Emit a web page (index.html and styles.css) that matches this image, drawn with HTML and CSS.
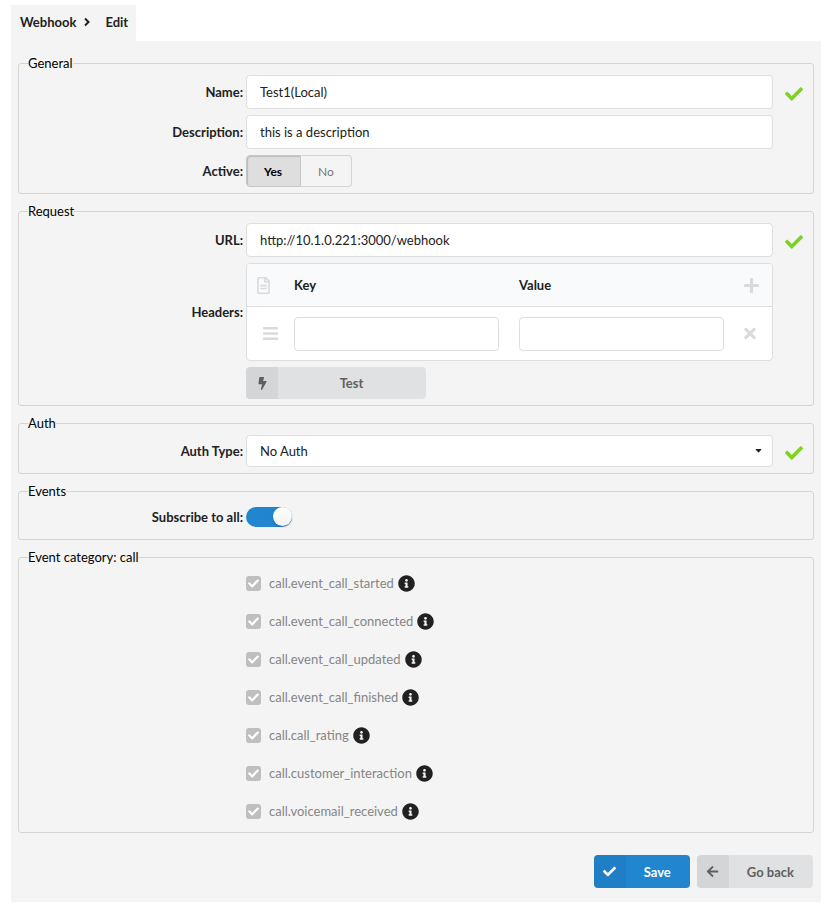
FILE: index.html
```html
<!DOCTYPE html>
<html lang="en">
<head>
    <meta charset="UTF-8">
    <meta name="viewport" content="width=device-width, initial-scale=1.0">
    <title>Webhook - Edit</title>
    <link rel="stylesheet" href="styles.css">
</head>
<body>
    <!-- Shared icons -->
    <svg class="sprite" aria-hidden="true">
        <symbol id="check" viewBox="0 0 512 512"><path d="M173.898 439.404l-166.4-166.4c-9.997-9.997-9.997-26.206 0-36.204l36.203-36.204c9.997-9.998 26.207-9.998 36.204 0L192 312.69 432.095 72.596c9.997-9.997 26.207-9.997 36.204 0l36.203 36.204c9.997 9.997 9.997 26.206 0 36.204l-294.4 294.401c-9.998 9.997-26.207 9.997-36.204-.001z"/></symbol>
        <symbol id="times" viewBox="0 0 352 512"><path d="M242.72 256l100.07-100.07c12.28-12.28 12.28-32.19 0-44.48l-22.24-22.24c-12.28-12.28-32.19-12.28-44.48 0L176 189.28 75.93 89.21c-12.28-12.28-32.19-12.28-44.48 0L9.21 111.45c-12.28 12.28-12.28 32.19 0 44.48L109.28 256 9.21 356.07c-12.28 12.28-12.28 32.19 0 44.48l22.24 22.24c12.28 12.28 32.2 12.28 44.48 0L176 322.72l100.07 100.07c12.28 12.28 32.2 12.28 44.48 0l22.24-22.24c12.28-12.28 12.28-32.19 0-44.48L242.72 256z"/></symbol>
        <symbol id="plus" viewBox="0 0 448 512"><path d="M416 208H272V64c0-17.67-14.33-32-32-32h-32c-17.67 0-32 14.33-32 32v144H32c-17.67 0-32 14.33-32 32v32c0 17.67 14.33 32 32 32h144v144c0 17.67 14.33 32 32 32h32c17.67 0 32-14.33 32-32V304h144c17.67 0 32-14.33 32-32v-32c0-17.67-14.33-32-32-32z"/></symbol>
        <symbol id="bars" viewBox="0 0 448 512"><path d="M16 132h416c8.837 0 16-7.163 16-16V76c0-8.837-7.163-16-16-16H16C7.163 60 0 67.163 0 76v40c0 8.837 7.163 16 16 16zm0 160h416c8.837 0 16-7.163 16-16v-40c0-8.837-7.163-16-16-16H16c-8.837 0-16 7.163-16 16v40c0 8.837 7.163 16 16 16zm0 160h416c8.837 0 16-7.163 16-16v-40c0-8.837-7.163-16-16-16H16c-8.837 0-16 7.163-16 16v40c0 8.837 7.163 16 16 16z"/></symbol>
        <symbol id="file" viewBox="0 0 384 512"><path d="M288 248v28c0 6.6-5.4 12-12 12H108c-6.6 0-12-5.4-12-12v-28c0-6.6 5.4-12 12-12h168c6.6 0 12 5.4 12 12zm-12 72H108c-6.6 0-12 5.4-12 12v28c0 6.6 5.4 12 12 12h168c6.6 0 12-5.4 12-12v-28c0-6.6-5.4-12-12-12zm108-188.1V464c0 26.5-21.5 48-48 48H48c-26.5 0-48-21.5-48-48V48C0 21.5 21.5 0 48 0h204.1C264.8 0 277 5.1 286 14.1L369.9 98c9 8.9 14.1 21.2 14.1 33.9zm-128-80V128h76.1L256 51.9zM336 464V176H232c-13.3 0-24-10.7-24-24V48H48v416h288z"/></symbol>
        <symbol id="bolt" viewBox="0 0 320 512"><path d="M296 160H180.6l42.6-129.8C227.2 15 215.7 0 200 0H56C44 0 33.8 8.9 32.2 20.8l-32 240C-1.7 275.2 9.5 288 24 288h118.7L96.6 482.5c-3.6 15.2 8 29.5 23.3 29.5 8.4 0 16.4-4.4 20.8-12l176-304c9.3-15.9-2.2-36-20.7-36z"/></symbol>
        <symbol id="arrow" viewBox="0 0 448 512"><path d="M257.5 445.1l-22.2 22.2c-9.4 9.4-24.6 9.4-33.9 0L7 273c-9.4-9.4-9.4-24.6 0-33.9L201.4 44.7c9.4-9.4 24.6-9.4 33.9 0l22.2 22.2c9.5 9.5 9.3 25-.4 34.3L136.6 216H424c13.3 0 24 10.7 24 24v32c0 13.3-10.7 24-24 24H136.6l120.5 114.8c9.8 9.3 10 24.8.4 34.3z"/></symbol>
        <symbol id="info" viewBox="0 0 512 512"><path d="M256 8C119.043 8 8 119.083 8 256c0 136.997 111.043 248 248 248s248-111.003 248-248C504 119.083 392.957 8 256 8zm0 110c23.196 0 42 18.804 42 42s-18.804 42-42 42-42-18.804-42-42 18.804-42 42-42zm56 254c0 6.627-5.373 12-12 12h-88c-6.627 0-12-5.373-12-12v-24c0-6.627 5.373-12 12-12h12v-64h-12c-6.627 0-12-5.373-12-12v-24c0-6.627 5.373-12 12-12h64c6.627 0 12 5.373 12 12v100h12c6.627 0 12 5.373 12 12v24z"/></symbol>
        <symbol id="caret" viewBox="0 0 8 5"><path d="M1 0h6q1 0 .4.8L4.5 4.2q-.5.5-1 0L.6.8Q0 0 1 0z"/></symbol>
        <symbol id="chevron" viewBox="0 0 8 10"><path d="M2 1.500L5.500 5L2 8.500" fill="none" stroke="currentColor" stroke-width="2"/></symbol>
    </svg>

    <nav class="breadcrumb">
        <a href="#">Webhook</a>
        <svg class="chevron"><use href="#chevron"/></svg>
        <a href="#">Edit</a>
    </nav>

    <form class="panel">
        <fieldset>
            <legend>General</legend>
            <div class="row">
                <label class="row-label" for="name">Name:</label>
                <input class="text" type="text" id="name" value="Test1(Local)">
                <svg class="valid"><use href="#check"/></svg>
            </div>
            <div class="row">
                <label class="row-label" for="description">Description:</label>
                <input class="text" type="text" id="description" value="this is a description">
            </div>
            <div class="row">
                <span class="row-label">Active:</span>
                <div class="yes-no">
                    <button type="button" class="selected">Yes</button>
                    <button type="button">No</button>
                </div>
            </div>
        </fieldset>

        <fieldset>
            <legend>Request</legend>
            <div class="row">
                <label class="row-label" for="url">URL:</label>
                <input class="text" type="text" id="url" value="http://10.1.0.221:3000/webhook">
                <svg class="valid"><use href="#check"/></svg>
            </div>
            <div class="row">
                <span class="row-label">Headers:</span>
                <table class="headers">
                    <thead>
                        <tr>
                            <th class="tool"><svg class="icon-file"><use href="#file"/></svg></th>
                            <th>Key</th>
                            <th>Value</th>
                            <th class="tool"><button type="button" aria-label="Add header"><svg class="icon-plus"><use href="#plus"/></svg></button></th>
                        </tr>
                    </thead>
                    <tbody>
                        <tr>
                            <td class="tool drag"><svg class="icon-bars"><use href="#bars"/></svg></td>
                            <td><input class="text" type="text" aria-label="Key"></td>
                            <td><input class="text" type="text" aria-label="Value"></td>
                            <td class="tool"><button type="button" aria-label="Remove header"><svg class="icon-times"><use href="#times"/></svg></button></td>
                        </tr>
                    </tbody>
                </table>
            </div>
            <div class="row">
                <button type="button" class="btn btn-test">
                    <span class="btn-icon"><svg><use href="#bolt"/></svg></span>
                    <span class="btn-text">Test</span>
                </button>
            </div>
        </fieldset>

        <fieldset>
            <legend>Auth</legend>
            <div class="row">
                <label class="row-label" for="auth">Auth Type:</label>
                <div class="select">
                    <select id="auth">
                        <option>No Auth</option>
                    </select>
                    <svg class="caret"><use href="#caret"/></svg>
                </div>
                <svg class="valid"><use href="#check"/></svg>
            </div>
        </fieldset>

        <fieldset>
            <legend>Events</legend>
            <div class="row row-toggle">
                <label class="row-label" for="subscribe">Subscribe to all:</label>
                <input class="toggle" type="checkbox" id="subscribe" checked>
            </div>
        </fieldset>

        <fieldset class="events">
            <legend>Event category: call</legend>
            <div class="event">
                <span class="box"><input type="checkbox" id="started" checked disabled><svg><use href="#check"/></svg></span>
                <label for="started">call.event_call_started</label>
                <svg class="info"><use href="#info"/></svg>
            </div>
            <div class="event">
                <span class="box"><input type="checkbox" id="connected" checked disabled><svg><use href="#check"/></svg></span>
                <label for="connected">call.event_call_connected</label>
                <svg class="info"><use href="#info"/></svg>
            </div>
            <div class="event">
                <span class="box"><input type="checkbox" id="updated" checked disabled><svg><use href="#check"/></svg></span>
                <label for="updated">call.event_call_updated</label>
                <svg class="info"><use href="#info"/></svg>
            </div>
            <div class="event">
                <span class="box"><input type="checkbox" id="finished" checked disabled><svg><use href="#check"/></svg></span>
                <label for="finished">call.event_call_finished</label>
                <svg class="info"><use href="#info"/></svg>
            </div>
            <div class="event">
                <span class="box"><input type="checkbox" id="rating" checked disabled><svg><use href="#check"/></svg></span>
                <label for="rating">call.call_rating</label>
                <svg class="info"><use href="#info"/></svg>
            </div>
            <div class="event">
                <span class="box"><input type="checkbox" id="interaction" checked disabled><svg><use href="#check"/></svg></span>
                <label for="interaction">call.customer_interaction</label>
                <svg class="info"><use href="#info"/></svg>
            </div>
            <div class="event">
                <span class="box"><input type="checkbox" id="voicemail" checked disabled><svg><use href="#check"/></svg></span>
                <label for="voicemail">call.voicemail_received</label>
                <svg class="info"><use href="#info"/></svg>
            </div>
        </fieldset>

        <div class="actions">
            <button type="submit" class="btn btn-primary">
                <span class="btn-icon"><svg><use href="#check"/></svg></span>
                <span class="btn-text">Save</span>
            </button>
            <button type="button" class="btn">
                <span class="btn-icon"><svg><use href="#arrow"/></svg></span>
                <span class="btn-text">Go back</span>
            </button>
        </div>
    </form>
</body>
</html>
```

FILE: styles.css
```css
* {
    box-sizing: border-box;
}
body {
    margin: 0;
    padding: 5px 11px;
    background-color: #fff;
    color: #212121;
    font-family: Lato, sans-serif;
    font-size: 13px;
    line-height: 18px;
}
button, input, select {
    font-family: inherit;
    font-size: inherit;
    color: inherit;
    margin: 0;
}
button {
    cursor: pointer;
}
svg {
    display: block;
    fill: currentColor;
}
.sprite {
    display: none;
}

/* Breadcrumb tab */
.breadcrumb {
    display: inline-flex;
    align-items: center;
    height: 36px;
    padding: 0 8px 2px 9px;
    background-color: #f4f4f4;
    font-weight: bold;
    vertical-align: top;
}
.breadcrumb a {
    color: inherit;
    text-decoration: none;
}
.chevron {
    width: 8px;
    height: 10px;
    margin: 0 14px 0 7px;
}

.panel {
    padding: 14px 7px;
    background-color: #f4f4f4;
}
fieldset {
    display: block;
    min-width: 0;
    margin: 0 0 9px;
    padding: 3px 0 6px;
    border: 1px solid #d4d4d5;
    border-radius: 3px;
}
legend {
    height: 17px;
    margin-left: 9px;
    padding: 0;
    color: #000;
    line-height: 17px;
}

/* Form rows: label, control, validation mark */
.row {
    display: grid;
    grid-template-columns: 224px 1fr 18px;
    column-gap: 3px;
    align-items: center;
    padding-right: 10px;
}
.row + .row {
    margin-top: 6px;
}
.row-label {
    font-weight: bold;
    text-align: right;
}
.row > :nth-child(2) {
    margin-right: 9px;
}
.text {
    width: auto;
    min-width: 0;
    height: 34px;
    padding: 0 13px;
    border: 1px solid #dededf;
    border-radius: 4px;
    background-color: #fff;
    outline: none;
}
.valid {
    width: 18px;
    height: 18px;
    margin-top: 4px;
    color: #7ed321;
}

.yes-no {
    display: flex;
}
.yes-no button {
    height: 32px;
    padding: 0 17px;
    border: 1px solid #d4d4d5;
    border-left: 0;
    border-radius: 0 4px 4px 0;
    background-color: #f4f4f4;
    color: #767676;
    font-size: 12px;
}
.yes-no .selected {
    padding: 0 18px 0 17px;
    border: 1px solid #c6c6c6;
    border-radius: 4px 0 0 4px;
    background-color: #dedede;
    box-shadow: inset 1px 1px 1px #bbb;
    color: #000;
    font-weight: bold;
}

.headers {
    table-layout: fixed;
    border: 1px solid #dededf;
    border-radius: 4px;
    border-spacing: 0;
    background-color: #fff;
    overflow: hidden;
}
.headers th, .headers td {
    padding: 0 10px;
    text-align: left;
}
.headers th {
    height: 43px;
    border-bottom: 1px solid #dededf;
    background-color: #f9fafc;
}
.headers td {
    height: 53px;
}
.headers .tool {
    width: 38px;
    color: #dadada;
}
.headers .tool:first-child {
    width: 37px;
}
.headers .drag {
    padding-left: 16px;
    padding-right: 0;
}
.headers .text {
    display: block;
    width: 100%;
}
.headers button {
    display: block;
    padding: 0;
    border: 0;
    background: none;
}
.icon-file {
    width: 13px;
    height: 17px;
}
.icon-plus, .icon-bars {
    width: 15px;
    height: 17px;
}
.icon-times {
    width: 12px;
    height: 17px;
}

/* Labeled icon buttons */
.btn {
    display: flex;
    height: 33px;
    padding: 0;
    border: 0;
    border-radius: 4px;
    background-color: #e0e1e2;
    color: #5f5f5f;
    font-weight: bold;
    overflow: hidden;
}
.btn-icon {
    display: flex;
    align-items: center;
    justify-content: center;
    width: 32px;
    height: 100%;
    background-color: rgba(0, 0, 0, 0.05);
}
.btn-icon svg {
    width: 13px;
    height: 13px;
}
.btn-text {
    flex: 1;
    align-self: center;
    padding: 0 19px 0 18px;
}
.btn-primary {
    background-color: #2185d0;
    color: #fff;
}
.btn-test {
    grid-column: 2;
    width: 180px;
    height: 32px;
}

.select {
    display: grid;
    align-items: center;
}
.select select {
    grid-area: 1 / 1;
    width: 100%;
    height: 32px;
    padding: 0 13px;
    border: 1px solid #dededf;
    border-radius: 4px;
    background-color: #fff;
    appearance: none;
}
.caret {
    grid-area: 1 / 1;
    justify-self: end;
    width: 7px;
    height: 4px;
    margin-right: 11px;
    pointer-events: none;
}

.row-toggle {
    padding-top: 4px;
    padding-bottom: 6px;
}
.toggle {
    display: flex;
    justify-content: flex-end;
    width: 46px;
    height: 20px;
    border-radius: 10px;
    background-color: #2185d0;
    appearance: none;
}
.toggle::before {
    content: "";
    width: 19px;
    height: 19px;
    border-radius: 50%;
    background: linear-gradient(#fff, #f2f2f2);
    box-shadow: 0 1px 2px rgba(34, 36, 38, 0.3);
}

/* Event list */
.events {
    padding: 1px 0 5px;
}
.event {
    display: flex;
    align-items: center;
    height: 32px;
    margin-left: 227px;
    color: #858585;
}
.event + .event {
    margin-top: 6px;
}
.event label {
    margin: 0 4px 0 8px;
}
.box {
    display: grid;
    place-items: center;
}
.box input {
    grid-area: 1 / 1;
    width: 15px;
    height: 15px;
    border-radius: 3px;
    background-color: #bfbfbf;
    appearance: none;
}
.box svg {
    grid-area: 1 / 1;
    width: 11px;
    height: 11px;
    color: #fff;
    z-index: 1;
}
.info {
    width: 17px;
    height: 17px;
    color: #212121;
}

.actions {
    display: flex;
    justify-content: flex-end;
    gap: 7px;
    padding: 13px 1px 0 0;
}
```
